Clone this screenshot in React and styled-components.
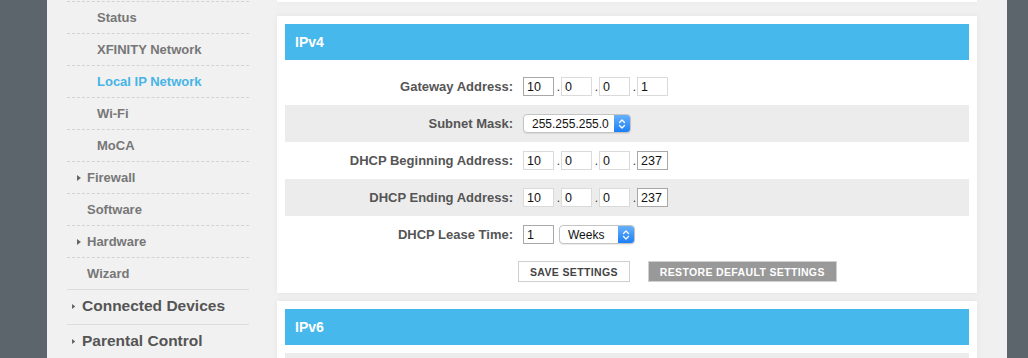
import styled, { createGlobalStyle } from "styled-components";

const GlobalStyle = createGlobalStyle`
  html, body {
    margin: 0;
    padding: 0;
    height: 358px;
    overflow: hidden;
    background: #f0f0f0;
    font-family: "Liberation Sans", Arial, sans-serif;
  }
`;

const navItems = [
  { label: "Status", level: 3 },
  { label: "XFINITY Network", level: 3 },
  { label: "Local IP Network", level: 3, active: true },
  { label: "Wi-Fi", level: 3 },
  { label: "MoCA", level: 3 },
  { label: "Firewall", level: 2, arrow: true },
  { label: "Software", level: 2 },
  { label: "Hardware", level: 2, arrow: true },
  { label: "Wizard", level: 2, last: true },
];

const Arrow = ({ size = 6 }) => (
  <svg width={size * 0.66} height={size} viewBox="0 0 4 6">
    <path d="M0 0 L4 3 L0 6 Z" fill="#666" />
  </svg>
);

const Chevrons = () => (
  <svg width="8" height="12" viewBox="0 0 8 12">
    <path
      d="M1.5 4.5 L4 2 L6.5 4.5 M1.5 7.5 L4 10 L6.5 7.5"
      fill="none"
      stroke="#fff"
      strokeWidth="1.3"
      strokeLinecap="round"
      strokeLinejoin="round"
    />
  </svg>
);

const IpInputs = ({ values, strong = [] }) => (
  <Controls>
    {values.map((v, i) => (
      <IpPart key={i}>
        {i > 0 && <Dot>.</Dot>}
        <Field readOnly value={v} $strong={strong.includes(i)} />
      </IpPart>
    ))}
  </Controls>
);

const Select = ({ value, width }) => (
  <SelectBox $width={width}>
    <SelectText>{value}</SelectText>
    <SelectArrow>
      <Chevrons />
    </SelectArrow>
  </SelectBox>
);

const App = () => {
  return (
    <>
      <GlobalStyle />
      <Page>
        <EdgeStrip $width={47} />
        <Sidebar>
          <NavTop />
          {navItems.map((item) => (
            <NavItem key={item.label} $level={item.level} $arrow={item.arrow} $last={item.last}>
              {item.arrow && (
                <ArrowSlot>
                  <Arrow />
                </ArrowSlot>
              )}
              <NavText $active={item.active}>{item.label}</NavText>
            </NavItem>
          ))}
          <TopItem>
            <ArrowSlot>
              <Arrow size={5} />
            </ArrowSlot>
            Connected Devices
          </TopItem>
          <TopItem>
            <ArrowSlot>
              <Arrow size={5} />
            </ArrowSlot>
            Parental Control
          </TopItem>
        </Sidebar>
        <Main>
          <CardStub />
          <Card>
            <CardHeader>IPv4</CardHeader>
            <FormRow>
              <Label>Gateway Address:</Label>
              <IpInputs values={["10", "0", "0", "1"]} strong={[0]} />
            </FormRow>
            <FormRow $shaded>
              <Label>Subnet Mask:</Label>
              <Controls>
                <Select value="255.255.255.0" width={108} />
              </Controls>
            </FormRow>
            <FormRow>
              <Label>DHCP Beginning Address:</Label>
              <IpInputs values={["10", "0", "0", "237"]} strong={[3]} />
            </FormRow>
            <FormRow $shaded>
              <Label>DHCP Ending Address:</Label>
              <IpInputs values={["10", "0", "0", "237"]} strong={[3]} />
            </FormRow>
            <FormRow>
              <Label>DHCP Lease Time:</Label>
              <Controls>
                <Field readOnly value="1" $strong />
                <Select value="Weeks" width={76} />
              </Controls>
            </FormRow>
            <ButtonRow>
              <Button>Save Settings</Button>
              <Button $secondary>Restore Default Settings</Button>
            </ButtonRow>
          </Card>
          <Card>
            <CardHeader>IPv6</CardHeader>
            <FormRow $shaded />
          </Card>
        </Main>
        <EdgeStrip $width={21} />
      </Page>
    </>
  );
};

export default App;

const Page = styled.div`
  display: flex;
  min-height: 358px;
  background: #f0f0f0;
`;

const EdgeStrip = styled.div`
  width: ${(p) => p.$width}px;
  flex-shrink: 0;
  background: #5d656c;
`;

const Sidebar = styled.nav`
  width: 230px;
  flex-shrink: 0;
  box-sizing: border-box;
  padding: 0 28px 0 20px;
  background: #f1f1f1;
`;

const NavTop = styled.div`
  height: 1px;
  border-bottom: 1px dashed #d3d3d3;
`;

const NavItem = styled.div`
  display: flex;
  align-items: center;
  height: 31px;
  padding-left: ${(p) => (p.$level === 3 ? 30 : p.$arrow ? 10 : 20)}px;
  border-bottom: 1px ${(p) => (p.$last ? "solid #dcdcdc" : "dashed #d3d3d3")};
`;

const ArrowSlot = styled.span`
  display: inline-flex;
  width: 10px;
  align-items: center;
`;

const NavText = styled.span`
  font-size: 13px;
  font-weight: bold;
  color: ${(p) => (p.$active ? "#47b4e6" : "#777")};
`;

const TopItem = styled.div`
  display: flex;
  align-items: center;
  height: 35px;
  padding-left: 5px;
  padding-bottom: 2px;
  box-sizing: border-box;
  font-size: 15.5px;
  font-weight: bold;
  color: #555;
  border-bottom: 1px solid #dcdcdc;
`;

const Main = styled.main`
  flex: 1;
  padding: 0 30px 0 0;
`;

const CardStub = styled.div`
  height: 2px;
  margin-bottom: 14px;
  background: #fff;
  box-shadow: 0 0 6px rgba(0, 0, 0, 0.06);
`;

const Card = styled.section`
  background: #fff;
  padding: 8px 8px 11px;
  margin-bottom: 8px;
  box-shadow: 0 0 6px rgba(0, 0, 0, 0.06);
`;

const CardHeader = styled.h2`
  margin: 0 0 8px;
  height: 36px;
  display: flex;
  align-items: center;
  padding-left: 10px;
  background: #47b8eb;
  color: #fff;
  font-size: 14px;
  font-weight: bold;
`;

const FormRow = styled.div`
  display: grid;
  grid-template-columns: 228px 1fr;
  column-gap: 10px;
  align-items: center;
  height: 37px;
  background: ${(p) => (p.$shaded ? "#ececec" : "#fff")};
`;

const Label = styled.label`
  text-align: right;
  font-size: 13px;
  font-weight: bold;
  color: #555;
`;

const Controls = styled.div`
  display: flex;
  align-items: center;
  gap: 5px;
`;

const IpPart = styled.span`
  display: flex;
  align-items: center;
`;

const Dot = styled.span`
  width: 7px;
  font-size: 12px;
  color: #333;
  text-align: right;
  padding-right: 1px;
  box-sizing: border-box;
  margin-left: -5px;
`;

const Field = styled.input`
  width: 31px;
  height: 19px;
  box-sizing: border-box;
  margin: 0;
  padding: 0 3px;
  border: 1px solid ${(p) => (p.$strong ? "#a8a8a8" : "#dadada")};
  border-radius: 0;
  outline: none;
  font-family: "Liberation Sans", Arial, sans-serif;
  font-size: 12.5px;
  color: #111;
  background: #fff;
`;

const SelectBox = styled.div`
  display: inline-flex;
  align-items: stretch;
  width: ${(p) => p.$width}px;
  height: 19px;
  box-sizing: border-box;
  border: 1px solid #c4c4c4;
  border-radius: 4px;
  overflow: hidden;
  background: #fff;
  box-shadow: 0 1px 1px rgba(0, 0, 0, 0.08);
`;

const SelectText = styled.span`
  flex: 1;
  display: flex;
  align-items: center;
  padding-left: 8px;
  font-size: 12px;
  color: #111;
`;

const SelectArrow = styled.span`
  width: 16px;
  display: flex;
  align-items: center;
  justify-content: center;
  background: linear-gradient(#68b1fa, #1c7ff7);
`;

const ButtonRow = styled.div`
  display: flex;
  gap: 18px;
  padding: 8px 0 0 233px;
`;

const Button = styled.button`
  height: 21px;
  margin: 0;
  padding: 0 11px;
  border: 1px solid #cfcfcf;
  border-radius: 0;
  background: ${(p) => (p.$secondary ? "#999" : "#fff")};
  color: ${(p) => (p.$secondary ? "#fff" : "#444")};
  font-family: "Liberation Sans", Arial, sans-serif;
  font-size: 10.5px;
  font-weight: bold;
  text-transform: uppercase;
  letter-spacing: 0.35px;
`;
